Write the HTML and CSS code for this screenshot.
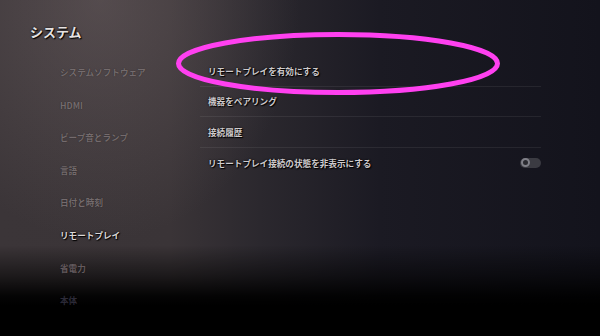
FILE: index.html
```html
<!DOCTYPE html>
<html lang="ja">
<head>
<meta charset="utf-8">
<link rel="stylesheet" href="styles.css">
</head>
<body>
<div class="page">
  <h1 class="title">システム</h1>
  <div class="content">
    <ul class="nav">
      <li class="nav-item">システムソフトウェア</li>
      <li class="nav-item">HDMI</li>
      <li class="nav-item">ビープ音とランプ</li>
      <li class="nav-item">言語</li>
      <li class="nav-item">日付と時刻</li>
      <li class="nav-item active">リモートプレイ</li>
      <li class="nav-item dim">省電力</li>
      <li class="nav-item dimmer">本体</li>
    </ul>
    <ul class="list">
      <li class="row">リモートプレイを有効にする</li>
      <li class="row">機器をペアリング</li>
      <li class="row">接続履歴</li>
      <li class="row">
        <span>リモートプレイ接続の状態を非表示にする</span>
        <span class="toggle"><span class="knob"></span></span>
      </li>
    </ul>
  </div>
  <svg class="mark" width="600" height="336" viewBox="0 0 600 336">
    <ellipse cx="338" cy="63.5" rx="159.5" ry="29" fill="none" stroke="#ff40f0" stroke-width="5"/>
  </svg>
</div>
</body>
</html>
```

FILE: styles.css
```css
* { box-sizing: border-box; }
html, body { margin: 0; padding: 0; }
body {
  width: 600px;
  height: 336px;
  overflow: hidden;
  font-family: "Noto Sans CJK JP", "Noto Sans", sans-serif;
  background:
    linear-gradient(to bottom, rgba(0,0,0,0) 0, rgba(0,0,0,0) 245px, rgba(0,0,0,0.5) 275px, rgba(0,0,0,0.92) 296px, #000 305px, #000 336px),
    radial-gradient(ellipse 200px 240px at 100px 0px, rgba(110,98,100,0.5), rgba(110,98,100,0)),
    linear-gradient(to right, #3b3538 0, #3a3437 170px, #2b282e 260px, #1b1a23 380px, #13131c 600px);
}
.page {
  position: relative;
  width: 600px;
  height: 336px;
  display: flex;
  flex-direction: column;
}
.title {
  margin: 0;
  padding: 24px 0 0 30px;
  font-size: 13px;
  line-height: 16px;
  font-weight: 700;
  color: #e6e2e2;
  text-shadow: 0 0 2px #000, 1px 1px 1px #000;
}
.content {
  display: flex;
  margin-top: 16px;
}
.nav {
  list-style: none;
  margin: 0;
  padding: 0 0 0 60px;
  width: 200px;
}
.nav-item {
  height: 32.6px;
  line-height: 32.6px;
  font-size: 8.6px;
  font-weight: 700;
  color: #746b6d;
  white-space: nowrap;
  text-shadow: 0 0 1px rgba(0,0,0,0.5);
}
.nav-item.active {
  color: #dcd8d8;
  text-shadow: 0 0 2px #000, 1px 1px 1px #000;
}
.nav-item.dim { color: #645a5e; }
.nav-item.dimmer { color: #2c2a38; }
.list {
  list-style: none;
  margin: 0;
  padding: 0;
  width: 341px;
}
.row {
  display: flex;
  align-items: center;
  justify-content: space-between;
  height: 30.5px;
  padding-left: 8px;
  font-size: 8.6px;
  font-weight: 700;
  color: #cfcbcd;
  white-space: nowrap;
  text-shadow: 0 0 2px #000, 1px 1px 1px #000;
  border-bottom: 1px solid rgba(255,255,255,0.07);
}
.row:last-child { border-bottom: none; }
.toggle {
  display: flex;
  align-items: center;
  width: 21px;
  height: 10px;
  border-radius: 5px;
  background: #3b3b42;
  padding-left: 1px;
}
.knob {
  width: 9px;
  height: 9px;
  border-radius: 50%;
  background: #2a2a30;
  border: 2px solid #808088;
}
.mark {
  position: absolute;
  left: 0;
  top: 0;
}
```
